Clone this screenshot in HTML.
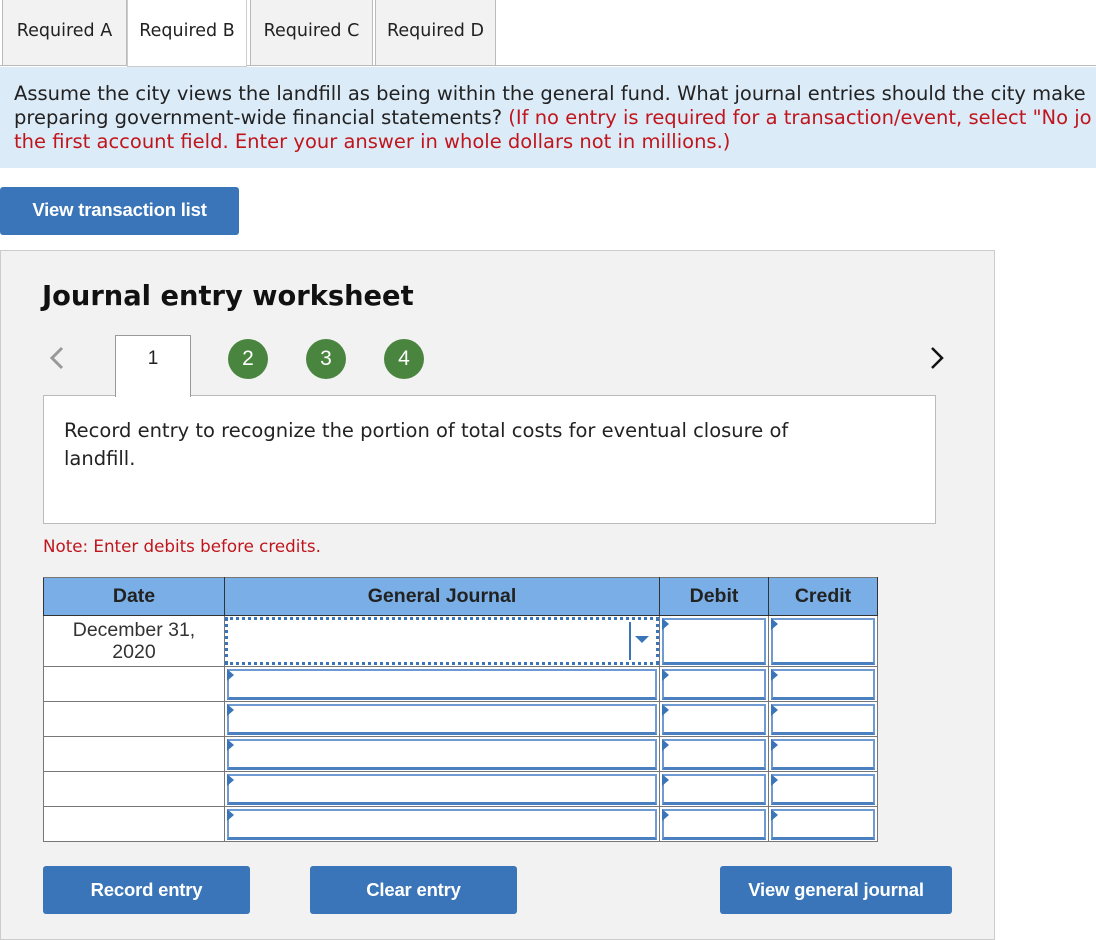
<!DOCTYPE html>
<html><head><meta charset="utf-8"><style>
*{margin:0;padding:0;box-sizing:border-box}
body{width:1096px;height:928px;position:relative;background:#fff;font-family:"DejaVu Sans","Liberation Sans",sans-serif;overflow:hidden;color:#222}
.a{position:absolute}
.tab{position:absolute;top:0;height:66px;background:#f2f2f2;border:1px solid #bbb;border-top:none;font-size:17.5px;text-align:center;line-height:62px;color:#222;white-space:nowrap}
.btn{position:absolute;background:#3a75b9;color:#fff;font-family:"Liberation Sans",Arial,sans-serif;font-weight:bold;font-size:18.5px;text-align:center;border-radius:3px;letter-spacing:-0.2px}
.circ{position:absolute;top:339px;width:40px;height:40px;border-radius:50%;background:#4a8540;color:#fff;font-family:"Liberation Sans",Arial,sans-serif;font-size:21px;text-align:center;line-height:40px}
table{position:absolute;left:43px;top:577px;border-collapse:collapse;font-family:"Liberation Sans",Arial,sans-serif}
th{background:#79aee6;height:38px;font-size:19.5px;font-weight:bold;color:#222;border:1px solid #333;border-top-color:#777}
td{border:1px solid #777;background:#fff;position:relative;padding:0}
.in{position:absolute;left:2px;right:2px;top:2px;bottom:1px;border:2px solid #6f9bd2;border-bottom:3px solid #4a7fc0}
.in:before{content:"";position:absolute;left:-2px;top:-2px;border-left:7px solid #3a75b9;border-top:6px solid transparent;border-bottom:6px solid transparent}
</style></head><body>
<div class="tab" style="left:2px;width:125px">Required A</div>
<div class="tab" style="left:127px;width:120px;background:#fff;height:67px;border-color:#ccc;z-index:2">Required B</div>
<div class="tab" style="left:250px;width:123px">Required C</div>
<div class="tab" style="left:375px;width:121px">Required D</div>
<div class="a" style="left:0;top:65px;width:1096px;height:1px;background:#bbb"></div>
<div class="a" style="left:0;top:67px;width:1096px;height:101px;background:#dcebf8;padding:15px 0 0 14px;font-size:19.5px;line-height:24px;white-space:nowrap;color:#222">Assume the city views the landfill as being within the general fund. What journal entries should the city make<br>preparing government-wide financial statements? <span style="color:#c0151c">(If no entry is required for a transaction/event, select "No jo<br>the first account field. Enter your answer in whole dollars not in millions.)</span></div>
<div class="btn" style="left:0;top:187px;width:239px;height:48px;line-height:46px">View transaction list</div>
<div class="a" style="left:0;top:250px;width:995px;height:690px;background:#f2f2f2;border:1px solid #ccc"></div>
<div class="a" style="left:42px;top:281px;font-size:27.3px;font-weight:bold;color:#111;white-space:nowrap">Journal entry worksheet</div>
<svg class="a" style="left:46px;top:345px" width="20" height="28"><path d="M16 3 L6 13 L16 23" stroke="#999" stroke-width="3" fill="none"/></svg>
<svg class="a" style="left:928px;top:345px" width="20" height="28"><path d="M4 3 L14 13 L4 23" stroke="#111" stroke-width="2.5" fill="none"/></svg>
<div class="a" style="left:43px;top:395px;width:893px;height:129px;background:#fff;border:1px solid #bbb;padding:21px 0 0 20px;font-size:19.5px;line-height:28px;white-space:nowrap">Record entry to recognize the portion of total costs for eventual closure of<br>landfill.</div>
<div class="a" style="left:115px;top:335px;width:76px;height:62px;background:#fff;border:1px solid #999;border-bottom:none;font-family:'Liberation Sans',Arial,sans-serif;font-size:19px;text-align:center;line-height:46px">1</div>
<div class="circ" style="left:228px">2</div>
<div class="circ" style="left:306px">3</div>
<div class="circ" style="left:384px">4</div>
<div class="a" style="left:43px;top:536px;font-size:16.7px;color:#c0151c;white-space:nowrap">Note: Enter debits before credits.</div>
<table>
<tr><th style="width:181px">Date</th><th style="width:435px">General Journal</th><th style="width:109px">Debit</th><th style="width:109px">Credit</th></tr>
<tr style="height:51px"><td style="text-align:center;font-size:19.5px;line-height:22px;color:#333">December 31,<br>2020</td><td><div class="a" style="left:0;right:0;top:1px;bottom:1px;border:3px dotted #3a75b9"></div><div class="a" style="right:28px;top:6px;width:2px;height:38px;background:#3a75b9"></div><div class="a" style="right:10px;top:20px;border-top:7px solid #3a75b9;border-left:7px solid transparent;border-right:7px solid transparent"></div></td><td><div class="in"></div></td><td><div class="in"></div></td></tr>
<tr style="height:35px"><td></td><td><div class="in"></div></td><td><div class="in"></div></td><td><div class="in"></div></td></tr>
<tr style="height:35px"><td></td><td><div class="in"></div></td><td><div class="in"></div></td><td><div class="in"></div></td></tr>
<tr style="height:35px"><td></td><td><div class="in"></div></td><td><div class="in"></div></td><td><div class="in"></div></td></tr>
<tr style="height:35px"><td></td><td><div class="in"></div></td><td><div class="in"></div></td><td><div class="in"></div></td></tr>
<tr style="height:35px"><td></td><td><div class="in"></div></td><td><div class="in"></div></td><td><div class="in"></div></td></tr>
</table>
<div class="btn" style="left:43px;top:866px;width:207px;height:48px;line-height:48px">Record entry</div>
<div class="btn" style="left:310px;top:866px;width:207px;height:48px;line-height:48px">Clear entry</div>
<div class="btn" style="left:720px;top:866px;width:232px;height:48px;line-height:48px">View general journal</div>
</body></html>
